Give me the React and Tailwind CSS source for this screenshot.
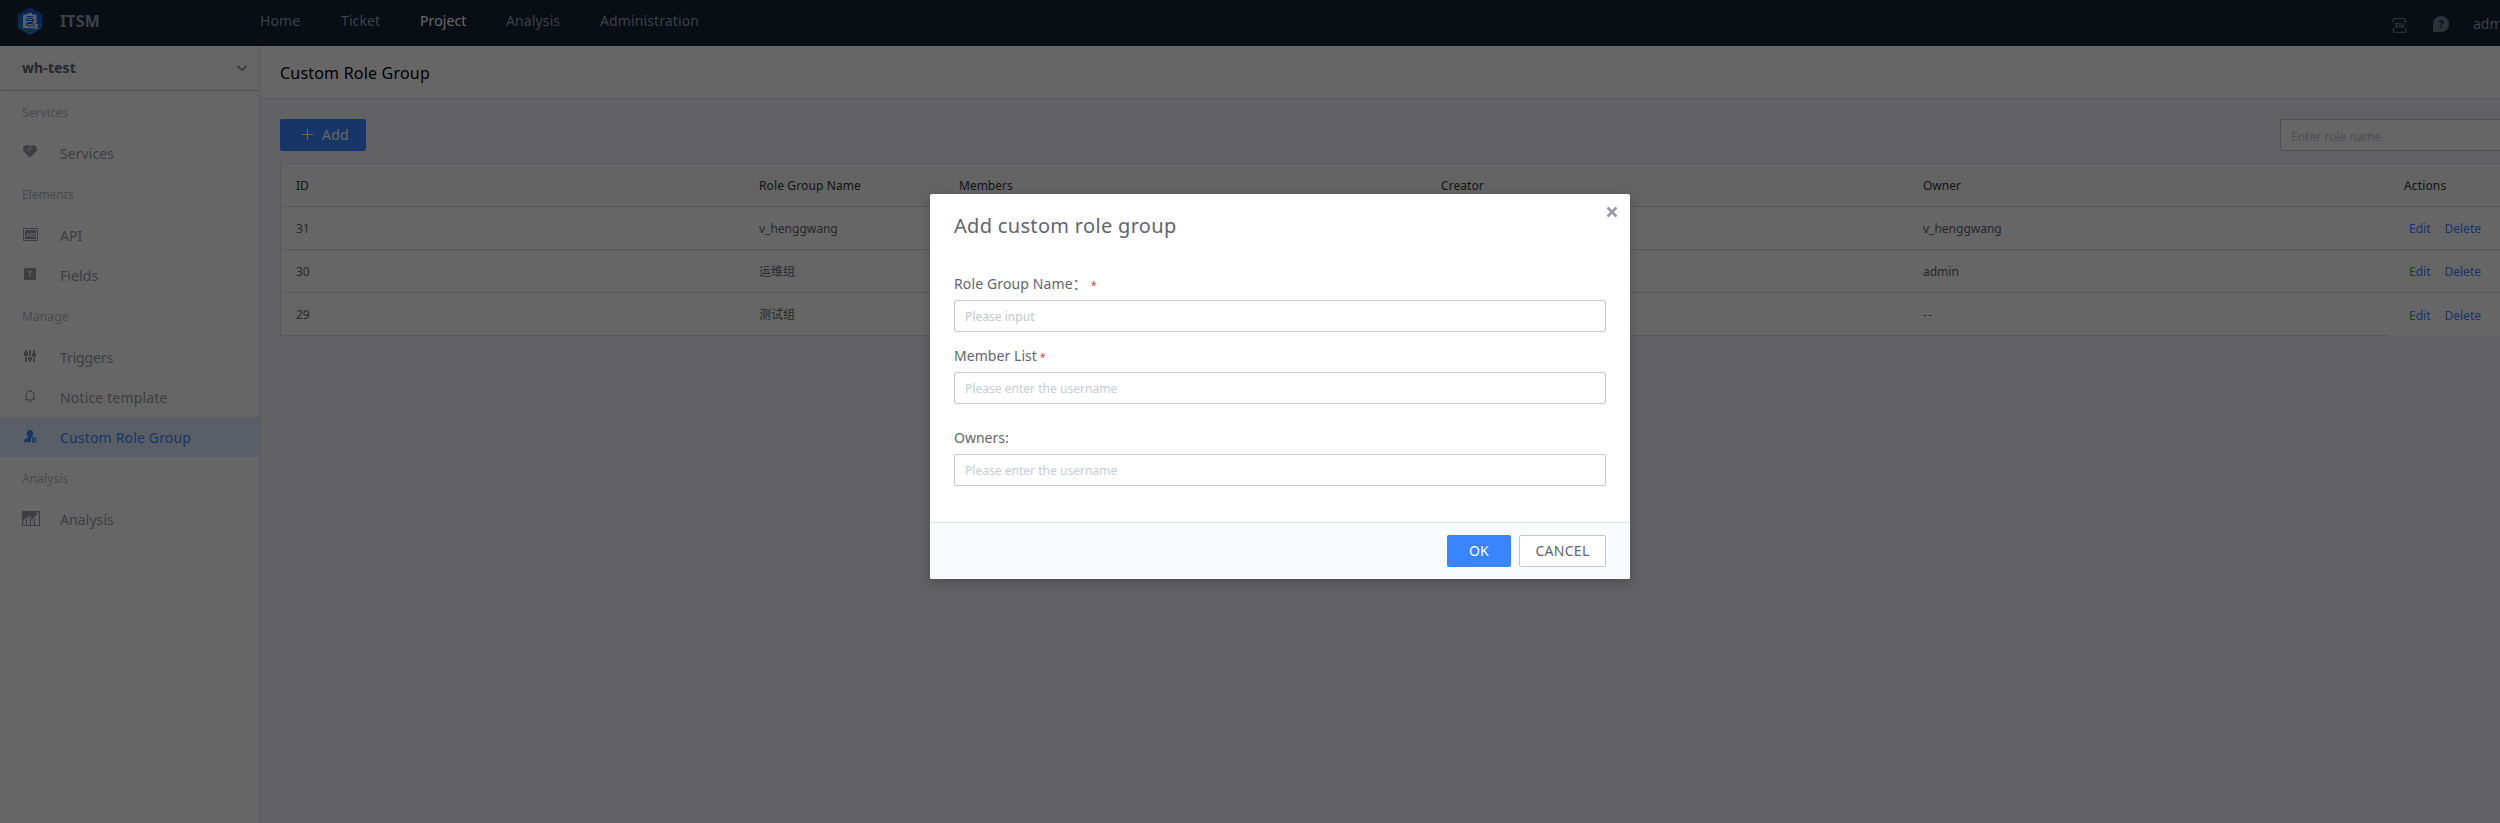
import React from 'react';

const navItems = [
  { label: 'Home', cls: 'w-[81px] tracking-[0.1px]' },
  { label: 'Ticket', cls: 'w-[79px] tracking-[0.1px]' },
  { label: 'Project', cls: 'w-[86px] tracking-[0.1px] text-white' },
  { label: 'Analysis', cls: 'w-[94px] tracking-[0.12px]' },
  { label: 'Administration', cls: 'tracking-[0.12px]' },
];

const HeartIcon = () => (
  <svg width="14" height="13" viewBox="0 0 14 13">
    <path
      fill="currentColor"
      d="M7 12.800 1.100 7A4 4 0 0 1 .2 3.200 3.800 3.800 0 0 1 3.800.3C5.200.3 6.300.8 7 1.600 7.700.8 8.800.3 10.200.3a3.800 3.800 0 0 1 3.600 2.900A4 4 0 0 1 12.900 7Z"
    />
    <path d="M3.600 5c.8.9 2 .7 2.700 0L7.800 3.600l1.600-.4M6.900 2.200 5.300 3.700" fill="none" stroke="#fff" strokeWidth=".9" />
  </svg>
);

const ApiIcon = () => (
  <svg width="15" height="13" viewBox="0 0 15 13">
    <path fill="currentColor" fillRule="evenodd" d="M0 0h15v13H0ZM1 1v11h13V1Z" />
    <path fill="currentColor" d="M2 2h11v9H2Z" />
    <text x="7.500" y="8.600" textAnchor="middle" fontSize="5.500" fontWeight="700" fill="#fff">API</text>
  </svg>
);

const FieldIcon = () => (
  <svg width="12" height="12" viewBox="0 0 12 12">
    <rect width="12" height="12" rx=".8" fill="currentColor" />
    <path d="M3.500 3.900h5M6 3.900v5" stroke="#fff" strokeWidth="1.300" opacity=".8" />
  </svg>
);

const TriggerIcon = () => (
  <svg width="12" height="12" viewBox="0 0 12 12" fill="currentColor">
    <path d="M1 0h2v2h1v4H0V2h1ZM1 7h2v5H1ZM5 0h2v6H5ZM4 7h4v3H7v2H5v-2H4ZM9 0h2v3h1v4H8V3h1ZM9 8h2v4H9Z" />
  </svg>
);

const BellIcon = () => (
  <svg width="12" height="14" viewBox="0 0 12 14" fill="none" stroke="currentColor" strokeWidth="1.100">
    <path d="M6 .4v1.300M2.200 10.600V5.900a3.800 3.800 0 0 1 7.600 0v4.700M.8 10.700h10.400M4.600 12.400h2.800" />
  </svg>
);

const UserIcon = () => (
  <svg width="13" height="13" viewBox="0 0 13 13" fill="currentColor">
    <path d="M6 0a3.300 3.300 0 0 1 3.200 3.500c0 1.300-.6 2.400-1.300 3.100V7.500H7v4.700H.2C0 10.200.4 9.300 1.600 8.800c1.400-.5 2.500-.7 2.500-1.400v-.8C3.300 5.900 2.800 4.800 2.800 3.500A3.300 3.300 0 0 1 6 0Z" />
    <path d="M8 7.300h4.400v1.200H8ZM8 9.300h4.400v1.200H8ZM8 11.200h4.400v1.200H8Z" />
  </svg>
);

const ChartIcon = () => (
  <svg width="18" height="15" viewBox="0 0 18 15">
    <path fill="currentColor" fillRule="evenodd" d="M0 0h18v15H0ZM1.200 10.500V14H4V9.500L2.800 9ZM5 8.300V14h2.800V7L7 6.400ZM9 8v6h2.800V8.400l-1.300 1.300ZM13 7.300V14h3.800V1.200H13.500l2 1.800-4.900 4.900L7 4.600 1.200 9.200l.6.7L7 5.800l3.600 3.300Z" />
  </svg>
);

const menu = [
  { title: 'Services', cls: 'tracking-[0.08px]', items: [{ label: 'Services', cls: 'tracking-[0.08px]', Icon: HeartIcon, box: 'w-[37px] pb-[3px]' }] },
  {
    title: 'Elements',
    cls: 'tracking-[-0.05px]',
    items: [
      { label: 'API', cls: '', Icon: ApiIcon, box: 'w-[37px] pb-[2px]' },
      { label: 'Fields', cls: 'tracking-[0.08px]', Icon: FieldIcon, box: 'w-[37px] pl-[1px] pb-[2px]' },
    ],
  },
  {
    title: 'Manage',
    cls: 'tracking-[0.1px]',
    items: [
      { label: 'Triggers', cls: 'tracking-[-0.12px]', Icon: TriggerIcon, box: 'w-[37px] pl-[1px] pb-[2px]' },
      { label: 'Notice template', cls: 'tracking-[0.16px]', Icon: BellIcon, box: 'w-[37px] pl-[1px] pb-[2px]' },
      { label: 'Custom Role Group', cls: 'tracking-[0.17px]', Icon: UserIcon, box: 'w-[37px] pl-[1px] pb-[1px]', active: true },
    ],
  },
  { title: 'Analysis', cls: 'tracking-[0.08px]', items: [{ label: 'Analysis', cls: 'tracking-[0.08px]', Icon: ChartIcon, box: 'w-[38px] -ml-px pb-[1px]' }] },
];

const rows = [
  { id: '31', name: 'v_henggwang', owner: 'v_henggwang' },
  { id: '30', name: '运维组', owner: 'admin' },
  { id: '29', name: '测试组', owner: '--', shift: 'pt-[2px]' },
];

const grid = 'grid grid-cols-[463px_200px_482px_482px_481px_500px] pl-[15px] pt-[2px] items-center text-[12px] whitespace-nowrap';

function Header() {
  return (
    <header className="h-[46px] w-full flex shrink-0 bg-[#182132] text-[#96a2b9]">
      <div className="w-[260px] h-[41px] flex items-center pl-[17px]">
        <svg width="26" height="30" viewBox="0 0 26 30" className="mt-px">
          <defs>
            <linearGradient id="hex" x1="0" y1="0" x2="0" y2="1">
              <stop offset="0" stopColor="#0b4fc4" />
              <stop offset="1" stopColor="#1d86e0" />
            </linearGradient>
          </defs>
          <path d="M13 1 25.200 8v14L13 29 .8 22V8Z" fill="url(#hex)" />
          <path d="M7.500 8.500h3V7h4.500v1.500h3.500q1 0 1 1V18l-1.500 4H7.500q-1.500 0-1.500-1.500v-10.500q0-1.500 1.500-1.500Z" fill="#e8eefa" />
          <path d="M9.500 10.500h7M9 14.500c0-3 7.500-3 7.500 0s-7 1-7 3.500 6.500 2.500 7.500.5M9.500 14.500h6.500M10 17.500h6" fill="none" stroke="#1660c8" strokeWidth="1.100" />
          <path d="M19.200 17.200a2 2 0 0 1 1.200 3.600l2 2.400H15.800l2-2.400a2 2 0 0 1 1.400-3.600Z" fill="#e8eefa" stroke="#1870d2" strokeWidth=".6" />
        </svg>
        <span className="ml-[17px] text-[16px] font-bold leading-[24px] tracking-[0.15px]">ITSM</span>
      </div>
      <nav className="flex h-[40px] items-center text-[14px]">
        {navItems.map((n) => (
          <span key={n.label} className={n.cls}>{n.label}</span>
        ))}
      </nav>
      <div className="ml-auto flex h-[48px] items-center w-[108px] whitespace-nowrap">
        <svg width="15" height="15" viewBox="0 0 15 15" fill="none" stroke="currentColor" strokeWidth="1" className="mt-[2px] shrink-0 opacity-80">
          <path d="M1 4.500V1.500Q1 .7 1.800.7h11.400v3.500M12 3l1.200 1.400L14.600 3M14 10.500v3q0 .8-.8.8H1.500v-3.500M.3 12l1.200-1.400L2.900 12" />
          <text x="7.500" y="10.200" textAnchor="middle" fontSize="7" fontWeight="700" fill="currentColor" stroke="none">EN</text>
        </svg>
        <svg width="16" height="16" viewBox="0 0 16 16" className="ml-[26px] shrink-0">
          <path d="M8 0a8 8 0 1 1 0 16H0V8a8 8 0 0 1 8-8Z" fill="#747d8f" />
          <text x="8" y="12" textAnchor="middle" fontSize="11" fontWeight="700" fill="#182132">?</text>
        </svg>
        <span className="ml-[24px] pb-[2px] text-[14px]">admin</span>
      </div>
    </header>
  );
}

function Sidebar() {
  return (
    <aside className="w-[260px] shrink-0 border-r border-[#dcdee5] bg-white">
      <div className="flex h-[45px] items-center rounded-b-[2px] border-b border-[#c4c6cc] pl-[22px] pr-[12px] text-[#63656e]">
        <span className="pb-[2px] text-[14px] font-bold tracking-[0.12px]">wh-test</span>
        <svg width="10" height="7" viewBox="0 0 10 7" className="ml-auto text-[#7c7f88]" fill="none" stroke="currentColor" strokeWidth="1.500">
          <path d="m.6.9 4.400 4.400L9.400.9" />
        </svg>
      </div>
      {menu.map((g) => (
        <div key={g.title}>
          <div className="flex h-[42px] items-center pl-[22px] pt-[2px] text-[12px] text-[#b8babf]">
            <span className={g.cls}>{g.title}</span>
          </div>
          {g.items.map(({ label, cls, Icon, box, active }) => (
            <div
              key={label}
              className={`flex h-[40px] items-center pl-[23px] text-[14px] ${active ? 'bg-[#e1ecff] text-[#3a84ff]' : 'text-[#979ba5]'}`}
            >
              <span className={`shrink-0 ${box}`}><Icon /></span>
              <span className={cls}>{label}</span>
            </div>
          ))}
        </div>
      ))}
    </aside>
  );
}

function RoleTable() {
  return (
    <div className="mt-[12px] w-[2223px] border-l border-t border-[#dcdee5] bg-white">
      <div className={`${grid} h-[43px] border-b border-[#dcdee5] bg-[#fafbfd] text-[#313238]`}>
        <span>ID</span>
        <span className="tracking-[0.12px]">Role Group Name</span>
        <span>Members</span>
        <span className="tracking-[0.05px]">Creator</span>
        <span>Owner</span>
        <span className="tracking-[0.15px]">Actions</span>
      </div>
      {rows.map((r, i) => (
        <div key={r.id} className={`${grid} h-[43px] border-b text-[#63656e] ${i === 2 ? 'border-white' : 'border-[#dcdee5]'}`}>
          <span>{r.id}</span>
          <span>{r.name}</span>
          <span />
          <span />
          <span className={r.owner === '--' ? 'tracking-[1.5px]' : ''}>{r.owner}</span>
          <span className={`flex gap-[14px] pl-[5px] text-[#3a84ff] ${r.shift || ''}`}>
            <span>Edit</span>
            <span>Delete</span>
          </span>
        </div>
      ))}
      <div className="-mt-px h-px w-[2108px] bg-[#dcdee5]" />
    </div>
  );
}

function Field({ label, mark, placeholder, tone, gap }) {
  return (
    <div className={gap}>
      <div className="flex h-[32px] items-center pb-[2px] text-[14px] text-[#63656e]">
        {label}
        {mark && <span className={`text-[10px] leading-[12px] text-[#ea3636] ${mark}`}>*</span>}
      </div>
      <div className={`flex h-[32px] items-center rounded-[2px] border border-[#c4c6cc] bg-white pl-[10px] pt-[1px] text-[12px] ${tone}`}>
        <span className="tracking-[0.03px]">{placeholder}</span>
      </div>
    </div>
  );
}

function Dialog() {
  return (
    <div className="flex h-[385px] w-[700px] flex-col rounded-[2px] bg-white shadow-[0_4px_12px_rgba(0,0,0,0.2)]">
      <div className="flex h-[74px] justify-between pl-[24px] pr-[12px]">
        <h2 className="pt-[17px] text-[20px] leading-[30px] tracking-[0.32px] text-[#63656e]">Add custom role group</h2>
        <svg width="12" height="12" viewBox="0 0 12 12" className="mt-[12px] text-[#979ba5]" stroke="currentColor" strokeWidth="2.600">
          <path d="m1.500 1.500 9 9M10.500 1.500l-9 9" />
        </svg>
      </div>
      <div className="flex-1 px-[24px]">
        <Field
          label={<span className="tracking-[0.13px]">Role Group Name：</span>}
          mark="ml-[4px] pt-[3px]"
          placeholder="Please input"
          tone="text-[#c4c6cc]"
        />
        <Field
          gap="mt-[8px]"
          label={<span className="tracking-[0.06px]">Member List</span>}
          mark="ml-[3px] pt-[3px]"
          placeholder="Please enter the username"
          tone="text-[#c3cdd7]"
        />
        <Field
          gap="mt-[18px]"
          label={<span>Owners:</span>}
          placeholder="Please enter the username"
          tone="text-[#c3cdd7]"
        />
      </div>
      <div className="flex h-[57px] items-center justify-end gap-[8px] rounded-b-[2px] border-t border-[#dcdee5] bg-[#fafbfd] pr-[24px] text-[14px]">
        <button className="h-[32px] w-[64px] rounded-[2px] bg-[#3a84ff] pb-[2px] text-white tracking-[0.3px]">OK</button>
        <button className="h-[32px] w-[87px] rounded-[2px] border border-[#c4c6cc] bg-white pb-[2px] text-[#63656e] tracking-[0.3px]">CANCEL</button>
      </div>
    </div>
  );
}

export default function App() {
  return (
    <div className="relative flex h-[823px] w-[2500px] flex-col overflow-hidden bg-[#f5f6fa] font-['Noto_Sans','Noto_Sans_CJK_SC',sans-serif]">
      <Header />
      <div className="flex min-h-0 flex-1">
        <Sidebar />
        <main className="min-w-0 flex-1 overflow-hidden">
          <div className="flex h-[53px] items-center border-b border-[#dcdee5] bg-white pl-[20px] pt-[2px] text-[16px] text-black">
            <span className="tracking-[0.2px]">Custom Role Group</span>
          </div>
          <div className="pl-[20px] pt-[20px]">
            <div className="flex h-[32px] w-[2400px]">
              <button className="flex h-[32px] w-[86px] items-center rounded-[2px] bg-[#3a84ff] pb-[1px] pl-[22px] text-[14px] text-white">
                <svg width="11" height="11" viewBox="0 0 11 11" stroke="currentColor" strokeWidth="1.200">
                  <path d="M5.500 0v11M0 5.500h11" />
                </svg>
                <span className="ml-[9px] tracking-[0.2px]">Add</span>
              </button>
              <div className="ml-[1914px] flex h-[32px] w-[400px] items-center rounded-[2px] border border-[#c4c6cc] bg-white pl-[10px] pt-[3px] text-[12px] text-[#c4c6cc]">
                Enter role name
              </div>
            </div>
            <RoleTable />
          </div>
        </main>
      </div>
      <div className="absolute inset-0 flex justify-center bg-black/60 pl-[60px] pt-[194px]">
        <Dialog />
      </div>
    </div>
  );
}
